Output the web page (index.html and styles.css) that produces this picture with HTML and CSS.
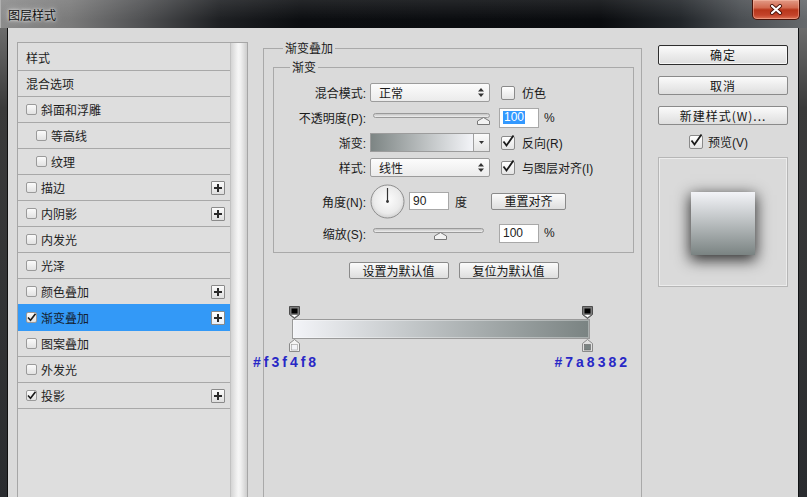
FILE: index.html
```html
<!DOCTYPE html>
<html lang="zh-CN">
<head>
<meta charset="utf-8">
<title>图层样式</title>
<link rel="stylesheet" href="styles.css">
</head>
<body>
<div class="window">
  <header class="titlebar">
    <span class="title">图层样式</span>
    <button class="close" aria-label="关闭"><svg width="14" height="11" viewBox="0 0 14 11"><path d="M3 2 L11 9 M11 2 L3 9" stroke="#4a1208" stroke-width="4" stroke-linecap="round"/><path d="M3 2 L11 9 M11 2 L3 9" stroke="#fff" stroke-width="2.2" stroke-linecap="round"/></svg></button>
  </header>
  <div class="frame">
    <main class="content">
      <div class="stylelist">
        <ul class="rows">
          <li class="row">样式</li>
          <li class="row">混合选项</li>
          <li class="row"><span class="cb"></span>斜面和浮雕</li>
          <li class="row sub"><span class="cb"></span>等高线</li>
          <li class="row sub"><span class="cb"></span>纹理</li>
          <li class="row"><span class="cb"></span>描边<span class="plus"><svg width="12" height="12" viewBox="0 0 12 12"><path d="M6 2v8M2 6h8" stroke="#2a2a2a" stroke-width="2"/></svg></span></li>
          <li class="row"><span class="cb"></span>内阴影<span class="plus"><svg width="12" height="12" viewBox="0 0 12 12"><path d="M6 2v8M2 6h8" stroke="#2a2a2a" stroke-width="2"/></svg></span></li>
          <li class="row"><span class="cb"></span>内发光</li>
          <li class="row"><span class="cb"></span>光泽</li>
          <li class="row"><span class="cb"></span>颜色叠加<span class="plus"><svg width="12" height="12" viewBox="0 0 12 12"><path d="M6 2v8M2 6h8" stroke="#2a2a2a" stroke-width="2"/></svg></span></li>
          <li class="row selected"><span class="cb"><svg width="9" height="9" viewBox="0 0 9 9"><path d="M1 4.5 L3.5 7.2 L8.5 0.8" fill="none" stroke="#1a1a1a" stroke-width="1.6"/></svg></span>渐变叠加<span class="plus"><svg width="12" height="12" viewBox="0 0 12 12"><path d="M6 2v8M2 6h8" stroke="#2a2a2a" stroke-width="2"/></svg></span></li>
          <li class="row"><span class="cb"></span>图案叠加</li>
          <li class="row"><span class="cb"></span>外发光</li>
          <li class="row"><span class="cb"><svg width="9" height="9" viewBox="0 0 9 9"><path d="M1 4.5 L3.5 7.2 L8.5 0.8" fill="none" stroke="#1a1a1a" stroke-width="1.6"/></svg></span>投影<span class="plus"><svg width="12" height="12" viewBox="0 0 12 12"><path d="M6 2v8M2 6h8" stroke="#2a2a2a" stroke-width="2"/></svg></span></li>
        </ul>
        <div class="scroll"></div>
      </div>

      <fieldset class="group outer">
        <legend>渐变叠加</legend>
        <fieldset class="group inner">
          <legend>渐变</legend>
          <div class="frow">
            <span class="lbl">混合模式:</span>
            <span class="select"><span>正常</span><svg width="6" height="9" viewBox="0 0 6 9"><path d="M3 0 L6 3.5 H0 Z M3 9 L0 5.5 H6 Z" fill="#333"/></svg></span>
            <label class="chk"><span class="ck"></span>仿色</label>
          </div>
          <div class="frow">
            <span class="lbl">不透明度(P):</span>
            <span class="slider"><span class="track"></span><span class="thumb" style="left:107px"><svg width="13" height="8" viewBox="0 0 13 8"><path d="M0.5 7.5 V4 L6.5 0.5 L12.5 4 V7.5 Z" fill="#f2f2f2" stroke="#777"/></svg></span></span>
            <span class="num"><span class="sel">100</span></span>
            <span class="unit">%</span>
          </div>
          <div class="frow">
            <span class="lbl">渐变:</span>
            <span class="gpick"><span class="gfill"></span><span class="gdrop"><svg width="5" height="3" viewBox="0 0 5 3"><path d="M0 0 H5 L2.5 3 Z" fill="#333"/></svg></span></span>
            <label class="chk"><span class="ck"><svg width="14" height="14" viewBox="0 0 14 14"><path d="M2.5 6.5 L5.5 10.5 L12.5 0.5" fill="none" stroke="#1a1a1a" stroke-width="1.8"/></svg></span>反向(R)</label>
          </div>
          <div class="frow">
            <span class="lbl">样式:</span>
            <span class="select"><span>线性</span><svg width="6" height="9" viewBox="0 0 6 9"><path d="M3 0 L6 3.5 H0 Z M3 9 L0 5.5 H6 Z" fill="#333"/></svg></span>
            <label class="chk"><span class="ck"><svg width="14" height="14" viewBox="0 0 14 14"><path d="M2.5 6.5 L5.5 10.5 L12.5 0.5" fill="none" stroke="#1a1a1a" stroke-width="1.8"/></svg></span>与图层对齐(I)</label>
          </div>
          <div class="frow tall">
            <span class="lbl">角度(N):</span>
            <svg class="dial" width="35" height="35" viewBox="0 0 35 35">
              <defs><radialGradient id="dg" cx="50%" cy="45%" r="55%"><stop offset="0" stop-color="#fdfdfd"/><stop offset="0.75" stop-color="#eaeaea"/><stop offset="1" stop-color="#d2d2d2"/></radialGradient></defs>
              <circle cx="17.5" cy="17.5" r="16.5" fill="url(#dg)" stroke="#8e8e8e"/>
              <path d="M17.5 17.5 V4" stroke="#333" stroke-width="1.2"/>
              <circle cx="17.5" cy="17.5" r="1.4" fill="#333"/>
            </svg>
            <span class="num short">90</span>
            <span class="unit deg">度</span>
            <button class="btn reset">重置对齐</button>
          </div>
          <div class="frow low">
            <span class="lbl">缩放(S):</span>
            <span class="slider scale"><span class="track"></span><span class="thumb" style="left:64px"><svg width="13" height="8" viewBox="0 0 13 8"><path d="M0.5 7.5 V4 L6.5 0.5 L12.5 4 V7.5 Z" fill="#f2f2f2" stroke="#777"/></svg></span></span>
            <span class="num">100</span>
            <span class="unit">%</span>
          </div>
        </fieldset>
        <div class="defaults">
          <button class="btn dflt">设置为默认值</button>
          <button class="btn dflt">复位为默认值</button>
        </div>
        <div class="geditor">
          <div class="stops">
            <svg width="11" height="13" viewBox="0 0 11 13"><path d="M0.5 0.5 H10.5 V8.5 L5.5 12.5 L0.5 8.5 Z" fill="#7c7c7c" stroke="#4e4e4e"/><rect x="2.5" y="2.5" width="6" height="5" fill="#000"/><path d="M2.5 9 L5.5 11.3 L8.5 9 Z" fill="#fff"/></svg>
            <svg width="11" height="13" viewBox="0 0 11 13"><path d="M0.5 0.5 H10.5 V8.5 L5.5 12.5 L0.5 8.5 Z" fill="#7c7c7c" stroke="#4e4e4e"/><rect x="2.5" y="2.5" width="6" height="5" fill="#000"/><path d="M2.5 9 L5.5 11.3 L8.5 9 Z" fill="#fff"/></svg>
          </div>
          <div class="gbar"></div>
          <div class="stops">
            <svg width="11" height="13" viewBox="0 0 11 13"><path d="M5.5 0.5 L10.5 4.5 V12.5 H0.5 V4.5 Z" fill="#f4f4f4" stroke="#8a8a8a"/><rect x="2.5" y="5.5" width="6" height="5.5" fill="#f3f4f8" stroke="#9a9a9a" stroke-width="0.6"/></svg>
            <svg width="11" height="13" viewBox="0 0 11 13"><path d="M5.5 0.5 L10.5 4.5 V12.5 H0.5 V4.5 Z" fill="#e0e0e0" stroke="#8a8a8a"/><rect x="2.5" y="5.5" width="6" height="5.5" fill="#7a8382" stroke="#666" stroke-width="0.6"/></svg>
          </div>
          <span class="hex start">#f3f4f8</span>
          <span class="hex end">#7a8382</span>
        </div>
      </fieldset>

      <aside class="side">
        <button class="btn big primary">确定</button>
        <button class="btn big">取消</button>
        <button class="btn big">新建样式(W)...</button>
        <label class="chk pv"><span class="ck"><svg width="14" height="14" viewBox="0 0 14 14"><path d="M2.5 6.5 L5.5 10.5 L12.5 0.5" fill="none" stroke="#1a1a1a" stroke-width="1.8"/></svg></span>预览(V)</label>
        <div class="preview"><div class="swatch"></div></div>
      </aside>
    </main>
  </div>
</div>
</body>
</html>
```

FILE: styles.css
```css
* { box-sizing: border-box; }
html, body { margin: 0; padding: 0; }
body {
  background: #0c0e11;
  font-family: "Noto Sans CJK SC", "Liberation Sans", sans-serif;
  font-size: 12px;
  color: #1b1b1b;
}
button { font: inherit; color: inherit; margin: 0; padding: 0; cursor: default; }

.window {
  width: 807px;
  height: 497px;
  overflow: hidden;
  position: relative;
  background: #2b2d31;
}

/* title bar */
.titlebar {
  height: 28px;
  position: relative;
  display: flex;
  align-items: center;
  padding: 1px 0 0 8px;
  background:
    linear-gradient(to bottom, rgba(255,255,255,0.10), rgba(255,255,255,0) 70%),
    linear-gradient(to right, #8c8c8c 0, #7a7a7a 70px, #515254 140px, #1e2023 220px, #0c0e11 300px, #0a0c0f 600px, #22262a 680px, #4a4e52 740px, #66696c 807px);
  box-shadow: inset 1px 0 0 #b0b0b0;
}
.title {
  font-size: 12px;
  line-height: 14px;
  color: #0e0e0e;
  text-shadow: 0 0 3px #fff, 0 0 7px rgba(255,255,255,0.75);
}
.close {
  position: absolute;
  top: 0;
  right: 7px;
  width: 48px;
  height: 20px;
  border: 1px solid #4a1208;
  border-top: none;
  border-radius: 0 0 5px 5px;
  background: linear-gradient(to bottom, #e29a86 0, #d26a50 40%, #b8361b 52%, #c4432a 80%, #de7457 100%);
  box-shadow: inset 0 0 0 1px rgba(255,200,180,0.45);
  display: flex;
  align-items: center;
  justify-content: center;
}

/* window frame */
.frame {
  display: flex;
  height: 469px;
  padding: 0 9px 0 8px;
  background: linear-gradient(to bottom, #6c6c6c 0, #3a3a3a 80px, #2a2c2f 100%);
}
.content {
  flex: 1;
  background: #dadada;
  display: flex;
  align-items: flex-start;
  padding-left: 9px;
  box-shadow: -1px 0 0 #0e0e0e, 1px 0 0 #101214;
}

/* style list */
.stylelist {
  width: 231px;
  height: 470px;
  margin-top: 14px;
  border: 1px solid #a6a6a6;
  display: flex;
  background: #dedede;
}
.rows {
  list-style: none;
  margin: 0;
  padding: 2px 0 0 0;
  flex: 1;
}
.row {
  height: 26px;
  border-bottom: 1px solid #a8a8a8;
  display: flex;
  align-items: center;
  padding: 0 5px 0 8px;
  color: #1d1d1d;
}
.row.sub { padding-left: 18px; }
.row.selected {
  background: #3399f7;
  border-bottom-color: #3399f7;
  box-shadow: 0 -1px 0 #3399f7;
  color: #14202e;
}
.cb {
  width: 11px;
  height: 11px;
  border: 1px solid #9a9a9a;
  border-radius: 2px;
  background: linear-gradient(#fbfbfb, #e2e2e2);
  margin-right: 4px;
  display: flex;
  align-items: center;
  justify-content: center;
}
.plus {
  margin-left: auto;
  width: 14px;
  height: 14px;
  border: 1px solid #8a8a8a;
  border-radius: 1px;
  background: linear-gradient(#fbfbfb, #dedede);
  display: flex;
  align-items: center;
  justify-content: center;
}
.selected .plus { background: linear-gradient(#ffffff, #e6eef8); }
.scroll {
  width: 17px;
  border-left: 1px solid #c2c2c2;
  background: linear-gradient(to right, #d4d4d4, #f6f6f6 45%, #f1f1f1 60%, #cdcdcd);
}

/* group boxes */
.group {
  border: 1px solid #a9a9a9;
  margin: 0;
  min-width: 0;
}
.group > legend {
  padding: 0 2px;
  font-size: 12px;
  line-height: 16px;
  color: #1b1b1b;
}
.outer {
  width: 379px;
  height: 470px;
  margin: 12px 0 0 15px;
  padding: 3px 7px 0 9px;
}
.outer > legend { margin-left: 10px; }
.inner {
  width: 361px;
  padding: 5px 0 8px 0;
}
.inner > legend { margin-left: 16px; }

/* form rows */
.frow {
  height: 25px;
  display: flex;
  align-items: center;
  font-family: "Liberation Sans", "Noto Sans CJK SC", sans-serif;
}
.frow.tall { height: 42px; }
.frow.low { height: 22px; }
.lbl {
  width: 92px;
  margin-right: 4px;
  text-align: right;
  white-space: nowrap;
}
.select {
  width: 120px;
  height: 19px;
  border: 1px solid #9c9c9c;
  border-radius: 2px;
  background: linear-gradient(#fcfcfc, #ebebeb);
  display: flex;
  align-items: center;
  justify-content: space-between;
  padding: 0 5px 0 8px;
}
.chk {
  display: flex;
  align-items: center;
  gap: 7px;
  margin-left: 11px;
}
.ck {
  width: 14px;
  height: 14px;
  border: 1px solid #8a8a8a;
  border-radius: 2px;
  background: linear-gradient(#ffffff, #e4e4e4);
  display: flex;
  align-items: flex-end;
  justify-content: center;
  overflow: visible;
}
.ck svg { flex: none; }

.slider {
  position: relative;
  width: 120px;
  height: 14px;
  padding: 2px 0 0 3px;
  display: flex;
  align-items: flex-start;
}
.slider.scale { width: 114px; }
.track {
  flex: 1;
  height: 5px;
  border: 1px solid #9a9a9a;
  border-radius: 3px;
  background: linear-gradient(#c4c4c4, #efefef);
}
.thumb {
  position: absolute;
  top: 6px;
  width: 13px;
  height: 8px;
  display: flex;
}
.num {
  width: 40px;
  height: 20px;
  margin-left: 9px;
  border: 1px solid #a8a8a8;
  background: #ffffff;
  padding-left: 3px;
  display: flex;
  align-items: center;
  font-family: "Liberation Sans", sans-serif;
  font-size: 12px;
  color: #222;
}
.frow.low .num { margin-left: 15px; height: 19px; }
.num.short { margin-left: 4px; height: 18px; }
.sel {
  background: #3399ff;
  color: #fff;
  line-height: 13px;
  padding: 0 1px;
}
.unit { margin-left: 5px; }
.unit.deg { margin-left: 6px; font-family: "Noto Sans CJK SC", sans-serif; }

.gpick {
  width: 120px;
  height: 19px;
  border: 1px solid #9c9c9c;
  display: flex;
}
.gfill {
  flex: 1;
  background: linear-gradient(to right, #7d8584, #bfc3c4 55%, #f3f4f8);
}
.gdrop {
  width: 16px;
  border-left: 1px solid #a0a0a0;
  background: linear-gradient(#fbfbfb, #e4e4e4);
  display: flex;
  align-items: center;
  justify-content: center;
}
.dial { flex: none; }

/* buttons */
.btn {
  border: 1px solid #8a8a8a;
  border-radius: 2px;
  background: linear-gradient(#fbfbfb, #ececec 50%, #dedede);
  display: flex;
  align-items: center;
  justify-content: center;
  font-family: "Noto Sans CJK SC", "Liberation Sans", sans-serif;
  font-size: 12px;
  line-height: 14px;
  color: #141414;
}
.btn.reset { width: 75px; height: 17px; margin-left: 24px; }
.defaults {
  display: flex;
  justify-content: center;
  gap: 10px;
  margin-top: 9px;
}
.btn.dflt { width: 100px; height: 17px; }

/* gradient editor */
.geditor {
  position: relative;
  width: 298px;
  margin: 27px 0 0 19px;
}
.stops {
  display: flex;
  justify-content: space-between;
  margin: 0 -3px;
  height: 13px;
}
.gbar {
  height: 20px;
  border: 1px solid #9a9a9a;
  background: linear-gradient(to right, #f3f4f8, #7a8382);
  box-shadow: inset 0 0 0 1px rgba(255,255,255,0.35);
}
.hex {
  position: absolute;
  top: 48px;
  font-family: "Liberation Sans", sans-serif;
  font-weight: bold;
  font-size: 14px;
  line-height: 16px;
  letter-spacing: 3px;
  color: #2828c6;
}
.hex.start { left: -39px; }
.hex.end { right: -40px; }

/* right column */
.side {
  width: 130px;
  margin: 17px 0 0 16px;
  display: flex;
  flex-direction: column;
}
.btn.big {
  height: 19px;
  margin-top: 11px;
  letter-spacing: 1px;
}
.btn.big.primary {
  height: 20px;
  margin-top: 0;
  border-color: #2e2e2e;
  box-shadow: inset 0 0 0 1px #f6f6f6;
}
.chk.pv {
  margin: 8px 0 0 31px;
  height: 17px;
  gap: 5px;
  font-family: "Liberation Sans", "Noto Sans CJK SC", sans-serif;
}
.preview {
  margin-top: 7px;
  width: 130px;
  height: 130px;
  border: 1px solid #b6b6b6;
  box-shadow: inset 1px 1px 0 #ececec, inset -1px -1px 0 #ececec;
  display: flex;
  align-items: center;
  justify-content: center;
}
.swatch {
  width: 64px;
  height: 63px;
  margin-top: 2px;
  background: linear-gradient(to bottom, #f3f4f8, #c4c8ca 40%, #7a8382);
  box-shadow: 0 4px 14px 1px rgba(0,0,0,0.8);
}
```
